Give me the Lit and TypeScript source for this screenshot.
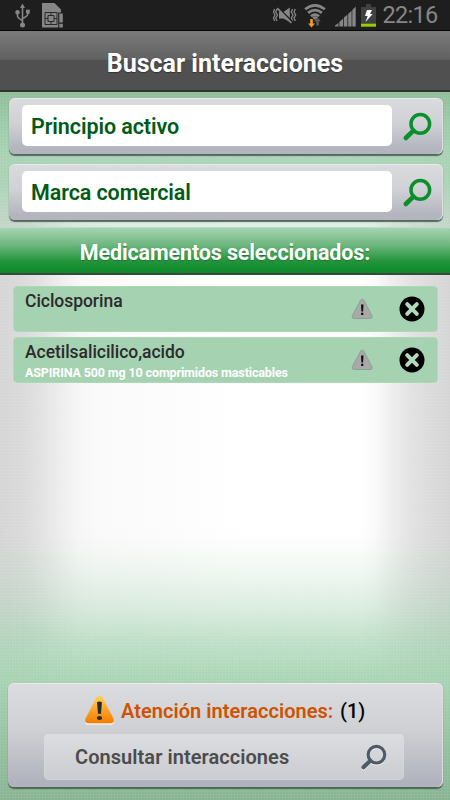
import { LitElement, html, css } from "lit";
import { customElement, property } from "lit/decorators.js";

@customElement("search-icon")
class SearchIcon extends LitElement {
  static styles = css`
    :host { display: block; color: #0a8f2c; }
    svg { display: block; width: 100%; height: 100%; overflow: visible; }
  `;
  render() {
    return html`<svg viewBox="0 0 28 28" fill="none" stroke="currentColor">
      <circle cx="17.3" cy="10.9" r="9.3" stroke-width="3.5"></circle>
      <path d="M10.4 17.6 2.8 25" stroke-width="4.6" stroke-linecap="round"></path>
    </svg>`;
  }
}

@customElement("status-bar")
class StatusBar extends LitElement {
  static styles = css`
    :host { display: flex; height: 30px; background: #1e1e1e; border-bottom: 1px solid #060606; box-sizing: content-box; color: #868686; }
    svg { display: block; flex: none; }
    .usb { margin: 3px 0 0 15px; }
    .sim { margin: 3px 0 0 12px; }
    .mute { margin: 6px 0 0 auto; }
    .wifi { margin: 3px 0 0 7px; }
    .signal { margin: 6px 0 0 8.5px; }
    .battery { margin: 4px 0 0 5px; }
    .clock { width: 74.5px; box-sizing: border-box; padding-left: 7px; font: 400 23.5px/31px Roboto, sans-serif; letter-spacing: -0.7px; white-space: nowrap; }
  `;
  render() {
    return html`
      <svg class="usb" width="15" height="25" viewBox="0 0 15 25" fill="none" stroke="currentColor" stroke-width="1.6">
        <path d="M7.5 4v18M2.5 9v4q0 2 5 4.5M12.8 8v3q0 2-5.3 4.5"></path>
        <path d="M7.5 0.5 10 5H5z" fill="currentColor" stroke="none"></path>
        <circle cx="2.5" cy="9.3" r="2.2" fill="currentColor" stroke="none"></circle>
        <path d="M11 6.7h3.8v3.8H11z" fill="currentColor" stroke="none"></path>
        <circle cx="7.5" cy="22" r="2.5" fill="currentColor" stroke="none"></circle>
      </svg>
      <svg class="sim" width="22" height="25" viewBox="0 0 22 25">
        <path d="M0 0h12.5l6.5 6.5v3h-2.8v15H0z" fill="currentColor"></path>
        <path d="M3 9.5h12v12H3zM6 12.5v6h6v-6zM9 9.5v3m0 6v3M3 15.5h3m6 0h3" fill="none" stroke="#292929" stroke-width="1"></path>
        <path d="M17.3 10.5h3.5v9h-3.5zM17.3 20.8h3.5v3.6h-3.5z" fill="currentColor"></path>
      </svg>
      <svg class="mute" width="24" height="18" viewBox="0 0 24 18">
        <path d="M6 6h4.3L16.8 1.5v14.5L10.3 12.5H6z" fill="currentColor"></path>
        <path d="M4 3 2.7 6 4.5 9l-1.8 3L4 15M1.6 3 0.5 6 2 9 .5 12l1.1 3M19.6 3l-1.3 3L20 9l-1.7 3 1.3 3M22.3 3l-1.3 3L22.7 9 21 12l1.3 3" fill="none" stroke="currentColor" stroke-width="1.3"></path>
        <path d="M5.4 1.7 19 15.3" stroke="#1e1e1e" stroke-width="1.6"></path>
        <path d="M4.2 2.2 18.4 17" stroke="currentColor" stroke-width="1.8"></path>
      </svg>
      <svg class="wifi" width="22" height="26" viewBox="0 0 22 26">
        <g fill="none" stroke="currentColor" stroke-width="2.7">
          <path d="M1.1 6.2Q11 -1.6 20.9 6.2M4.1 9.9Q11 4.3 17.9 9.9M7 13.3q4-3.4 8 0"></path>
        </g>
        <path d="M8.2 14.2q2.8-1.7 5.6 0L11 17z" fill="currentColor"></path>
        <path d="M6.2 16h2.6v4.5h2.2l-3.5 4-3.5-4h2.2z" fill="#f59a24"></path>
        <path d="M12.3 22.5h2.5v-4h2l-3.2-4-3.4 4h2.1z" fill="#5c5c5c"></path>
      </svg>
      <svg class="signal" width="21" height="21" viewBox="0 0 21 21" fill="currentColor">
        <path d="M0 20.5v-1l3.5-2.5v3.5zM4.4 20.5V16L8.1 12.6v7.9zM8.9 20.5v-9l3.5-3.1v12.1zM13.2 20.5V8l3.4-3.3v15.8zM17.3 20.5V4l3.4-3.6v20.1z"></path>
      </svg>
      <svg class="battery" width="15" height="23" viewBox="0 0 15 23">
        <path d="M5 0h5v3h5v17H0V3h5z" fill="#414141"></path>
        <path d="M0 19.7h15v3H0z" fill="#97cd00"></path>
        <path d="M6 6h5L9 10h2.7L4.5 18 6.7 12H4z" fill="#fff"></path>
      </svg>
      <span class="clock">22:16</span>
    `;
  }
}

@customElement("search-field")
class SearchField extends LitElement {
  @property() label = "";
  static styles = css`
    :host {
      display: flex; box-sizing: border-box; height: 56px; padding: 6px 11px 8px 13.5px;
      border-radius: 6px; border-top: 1px solid #eaebed;
      background: linear-gradient(#dadbdf, #d0d1d5 45%, #b2b4be 92%);
      box-shadow: inset -1px 0 0 #dedfe3, 0 1.5px 1px #56695e;
      font-family: Roboto, sans-serif;
    }
    .input {
      width: 369.5px; height: 41px; box-sizing: border-box; padding-left: 9px; border-radius: 5px; background: #fff;
      color: #005b16; font-size: 21.5px; font-weight: 600; line-height: 44px; letter-spacing: -.09px; white-space: nowrap;
    }
    search-icon { width: 28px; height: 28px; margin: 8px 0 0 11.5px; }
  `;
  render() {
    return html`<div class="input">${this.label}</div><search-icon></search-icon>`;
  }
}

@customElement("drug-row")
class DrugRow extends LitElement {
  @property() name = "";
  @property() detail = "";
  static styles = css`
    :host { display: flex; height: 46px; border-radius: 5px; background: #a5d2b1; box-shadow: inset 0 0 0 .5px #b6dec0; font-family: Roboto, sans-serif; }
    .text { flex: 1; padding: 5px 0 0 12.5px; white-space: nowrap; }
    .name { font-size: 17.5px; line-height: 21px; font-weight: 500; color: #2c2a2c; letter-spacing: -.04px; }
    .detail { font-size: 12.5px; line-height: 19px; font-weight: 700; color: #fff; letter-spacing: -.13px; }
    .warn { margin: 11px 0 0; }
    .close { margin: 10px 12.5px 0 26.5px; }
    svg { display: block; flex: none; }
  `;
  render() {
    return html`
      <div class="text"><div class="name">${this.name}</div><div class="detail">${this.detail}</div></div>
      <svg class="warn" width="22" height="24" viewBox="0 0 22 24">
        <path d="M9.7 3q1.5-2.2 3 0l8.3 15.8q.8 2.7-1.7 2.7H3q-2.5 0-1.7-2.7z" fill="#a9a9a9" stroke="#8ba293" stroke-width="1"></path>
        <path d="M10 7.6h2.5L12.1 14.5h-1.7zM10.1 15.8h2.2v2.3h-2.2z" fill="#111"></path>
      </svg>
      <svg class="close" width="26" height="26" viewBox="0 0 26 26">
        <circle cx="13" cy="13" r="12.5" fill="#000"></circle>
        <path d="m8.2 8.2 9.6 9.6m0-9.6-9.6 9.6" stroke="#b1dabd" stroke-width="4" stroke-linecap="round"></path>
      </svg>
    `;
  }
}

@customElement("app-root")
class AppRoot extends LitElement {
  static styles = css`
    :host { display: flex; flex-direction: column; width: 450px; height: 800px; overflow: hidden; font-family: Roboto, sans-serif; }
    .header {
      height: 61px; box-sizing: border-box; border-bottom: 2px solid #333;
      background: linear-gradient(#7a7a7a, #606060 50%, #505050 50%, #505050);
      color: #fff; text-align: center; font-size: 25px; font-weight: 700; line-height: 65px;
      text-shadow: 0 1px 1px #333; white-space: nowrap;
    }
    .content {
      flex: 1; display: flex; flex-direction: column; box-sizing: border-box; padding-bottom: 13px;
      background:
        repeating-linear-gradient(90deg, #ffffff0d 0 1px, #fff0 1px 3px),
        repeating-linear-gradient(#ffffff0d 0 1px, #fff0 1px 3px),
        linear-gradient(#8fbe9a 0, #9ecbaa 35px, #a5d2b1f5 60px, #a5d2b1e0 90px, #a5d2b166 130px, #a5d2b100 175px, #a5d2b100 436px, #a5d2b10c 456px, #a5d2b128 478px, #a5d2b14c 500px, #a5d2b170 520px, #a5d2b1b0 548px, #a5d2b1f2 588px, #95c2a0 650px, #88b493 708px),
        linear-gradient(90deg, #d5d5d5, #dadada 25px, #e3e3e3 43px, #eeeeee 62px, #f7f7f7 80px, #fafafa 100px, #fcfcfc 160px, #fff 240px, #fff 360px, #fafafa 375px, #ededed 393px, #e1e1e1 413px, #d9d9d9 435px, #d5d5d5);
    }
    .searches { display: flex; flex-direction: column; gap: 10px; padding: 6px 7.5px 0 8.5px; }
    .section {
      flex: none; height: 48px; box-sizing: border-box; margin-top: 7px; border-top: 1px solid #b9dfc2; border-bottom: 2px solid #3e4540;
      background: linear-gradient(#a6d3b1, #73b983 35%, #219439 75%, #0c892a);
      color: #fff; text-align: center; font-size: 21.5px; font-weight: 700; line-height: 49px; letter-spacing: -.13px; white-space: nowrap;
      text-shadow: 0 1px 1px #26723a;
    }
    .list { display: flex; flex-direction: column; gap: 5.3px; padding: 10.7px 12.5px 0; }
    .alert {
      margin: auto 7.5px 0 8px; height: 104px; box-sizing: border-box; padding-left: 36px; border-radius: 6px;
      border-top: 1px solid #eaebed; background: linear-gradient(#dbdce0, #cfd0d3 45%, #b0b3bd 95%);
      box-shadow: inset -1px 0 0 #dedfe3, 0 1.5px 1px #4c6853;
    }
    .notice { display: flex; height: 50px; padding-left: 41px; box-sizing: border-box; font-size: 20px; font-weight: 600; line-height: 54px; letter-spacing: .04px; white-space: nowrap; color: #cf5200; }
    .notice svg { display: block; margin: 11px 6px 0 -1px; }
    .label { width: 219px; }
    .count { color: #050505; font-weight: 500; }
    .query {
      display: flex; width: 360px; height: 46px; box-sizing: border-box; border-radius: 5px;
      padding: 0 18px 0 31px; background: linear-gradient(#dcdde0, #cbccd1); box-shadow: inset 0 0 0 .5px #d9dadd;
      color: #4c4c4c; font-size: 20px; font-weight: 600; line-height: 47px; letter-spacing: .06px; white-space: nowrap;
    }
    .query search-icon { width: 25px; height: 25px; margin: 11px 0 0 auto; color: #4e5a66; filter: drop-shadow(0 1px 0 #eee); }
  `;
  render() {
    return html`
      <status-bar></status-bar>
      <div class="header">Buscar interacciones</div>
      <div class="content">
        <div class="searches">
          <search-field label="Principio activo"></search-field>
          <search-field label="Marca comercial"></search-field>
        </div>
        <div class="section">Medicamentos seleccionados:</div>
        <div class="list">
          <drug-row name="Ciclosporina"></drug-row>
          <drug-row name="Acetilsalicilico,acido" detail="ASPIRINA 500 mg 10 comprimidos masticables"></drug-row>
        </div>
        <div class="alert">
          <div class="notice">
            <svg width="31" height="30" viewBox="0 0 31 30">
              <defs><linearGradient id="amber" x2="0" y2="1"><stop stop-color="#ffd257"></stop><stop offset="1" stop-color="#f57b00"></stop></linearGradient></defs>
              <path d="M12.4 2.5q3.1-4 6.2 0l11 21.2q1.5 5-3 5H4.4q-4.5 0-3-5z" fill="#eff0f2" transform="translate(0 1)"></path>
              <path d="M12.4 2.5q3.1-4 6.2 0l11 21.2q1.2 4.5-3 4.5H4.4q-4.2 0-3-4.5z" fill="url(#amber)"></path>
              <path d="M13.1 7.2q2.4-1.4 4.8 0L17 18.8h-3z" fill="#232b2b"></path>
              <ellipse cx="15.5" cy="23" rx="2.6" ry="2.1" fill="#232b2b"></ellipse>
            </svg>
            <span class="label">Atención interacciones:</span><span class="count">(1)</span>
          </div>
          <div class="query"><span>Consultar interacciones</span><search-icon></search-icon></div>
        </div>
      </div>
    `;
  }
}
